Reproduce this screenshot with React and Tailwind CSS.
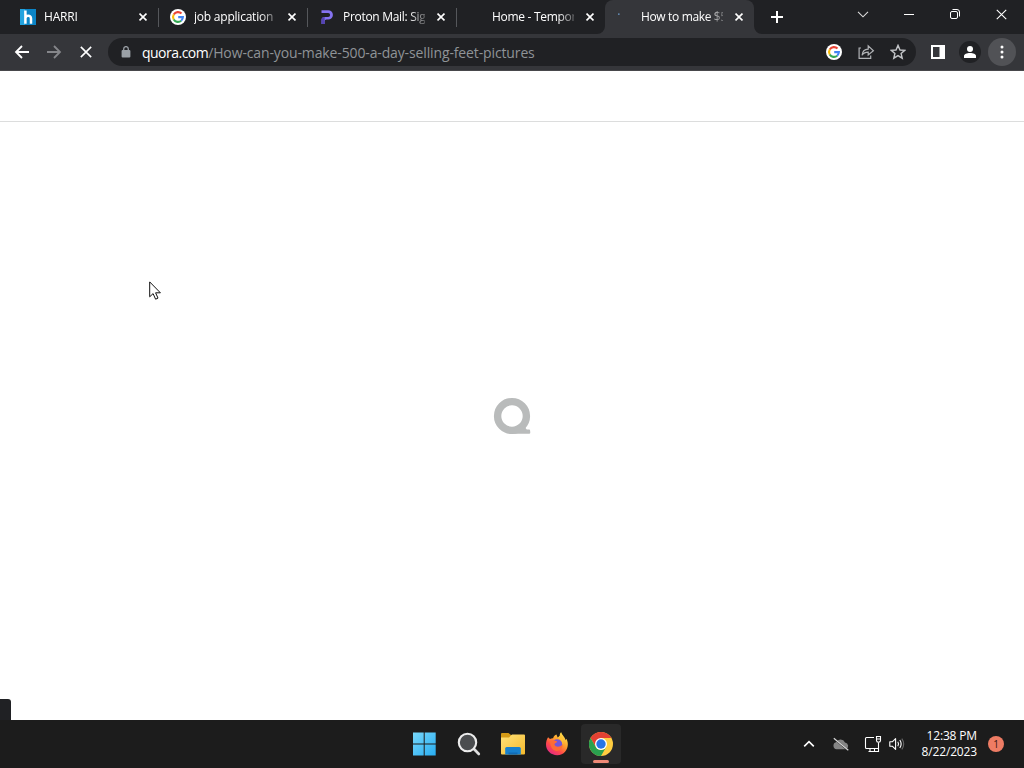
import React from "react";

function Cross({ size = 8, stroke = 1.6, color = "#fff" }) {
  return (
    <svg width={size} height={size} viewBox="0 0 10 10" className="block shrink-0">
      <path d="M0.7 0.7 9.3 9.3M9.3 0.7 0.7 9.3" stroke={color} strokeWidth={(stroke * 10) / size} fill="none" />
    </svg>
  );
}

function GoogleIcon() {
  return (
    <svg width="16" height="16" viewBox="0 0 16 16" className="block">
      <circle cx="8" cy="8" r="8" fill="#fff" />
      <g fill="none" strokeWidth="2.1">
        <path d="M3.75 5.5A4.9 4.9 0 0 1 11.5 4.6" stroke="#ea4335" />
        <path d="M3.75 5.5A4.9 4.9 0 0 0 3.75 10.5" stroke="#fbbc05" />
        <path d="M3.75 10.5A4.9 4.9 0 0 0 11.2 11.7" stroke="#34a853" />
        <path d="M11.2 11.7A4.9 4.9 0 0 0 12.9 8.1H8.2" stroke="#4285f4" />
      </g>
    </svg>
  );
}

function HarriIcon() {
  return (
    <svg width="16" height="16" viewBox="0 0 16 16" className="block">
      <path d="M0 0H16V16H0Z" fill="#0b84c6" />
      <path d="M0 0H5V16H0Z" fill="#22a3df" />
      <path d="M5.4 1.6V14.8M5.4 9.2C5.8 5.9 11 5.7 11 9.4V14.8" stroke="#fff" strokeWidth="2.5" fill="none" />
    </svg>
  );
}

function ProtonIcon() {
  return (
    <svg width="16" height="16" viewBox="0 0 16 16" className="block">
      <path d="M2.5 1.2H9.2A4.7 4.7 0 0 1 9.2 10.6H7.5A2 2 0 0 0 5.6 12.6V15H2.5V11.2A3.2 3.2 0 0 1 5.7 7.9H9.1A2 2 0 0 0 9.1 3.9H2.5Z" fill="#8573f0" />
      <path d="M2.5 11.2A3.2 3.2 0 0 1 5.7 7.9V11.3Q5.6 12 5.6 12.6V15H2.5Z" fill="#5543b5" />
    </svg>
  );
}

function LoadingDot() {
  return (
    <svg width="16" height="16" viewBox="0 0 16 16" className="block">
      <path d="M1 5.1H2.6" stroke="#6f9fd0" strokeWidth="1.4" />
    </svg>
  );
}

const tabs = [
  { title: "HARRI", icon: <HarriIcon />, sep: true, inset: "pl-[11px]", label: "ml-[8px] w-[83px] tracking-[-0.2px]" },
  { title: "job application -", icon: <GoogleIcon />, sep: true, inset: "pl-[12px]", label: "ml-[8px] w-[82px] tracking-[-0.22px]" },
  { title: "Proton Mail: Sig", icon: <ProtonIcon />, sep: true, inset: "pl-[12px]", label: "ml-[8px] w-[82px] tracking-[-0.3px]" },
  { title: "Home - Tempor", icon: null, sep: false, inset: "pl-[12px]", label: "ml-[8px] w-[82px] tracking-[-0.3px]" },
  { title: "How to make $5", icon: <LoadingDot />, active: true, inset: "pl-[12px]", label: "ml-[8px] w-[82px] tracking-[-0.35px]" },
];

function Tab({ tab }) {
  return (
    <div className={"relative flex h-[34px] w-[149px] shrink-0 items-center " + tab.inset + (tab.active ? " rounded-t-lg bg-[#35363a]" : "")}>
      {tab.active && (
        <svg className="absolute bottom-0 -left-2" width="165" height="8" viewBox="0 0 165 8">
          <path d="M0 8A8 8 0 0 0 8 0V8ZM157 0A8 8 0 0 0 165 8H157Z" fill="#35363a" />
        </svg>
      )}
      <div className="h-4 w-4 shrink-0">{tab.icon}</div>
      <div className={"shrink-0 whitespace-nowrap text-[12px] leading-[18px] text-white [mask-image:linear-gradient(to_right,#000_66px,transparent_88px)] " + tab.label}>
        {tab.title}
      </div>
      <div className="ml-[12px]"><Cross size={8} /></div>
      {tab.sep && <div className="-mr-px ml-auto h-[19px] w-px bg-[#55575b]" />}
    </div>
  );
}

function TabStrip() {
  return (
    <div className="flex h-[34px] bg-[#202124] pl-[9px]">
      {tabs.map((t) => <Tab key={t.title} tab={t} />)}
      <div className="flex w-[46px] items-center justify-center">
        <svg width="12" height="12" viewBox="0 0 12 12"><path d="M6 0V12M0 6H12" stroke="#fff" strokeWidth="2" /></svg>
      </div>
      <div className="ml-auto flex h-[28px]">
        <div className="flex w-[46px] items-center justify-center">
          <svg width="12" height="7" viewBox="0 0 12 7"><path d="M1 0.8 6 5.8 11 0.8" stroke="#ddd" strokeWidth="1.1" fill="none" /></svg>
        </div>
        <div className="flex w-[46px] items-center justify-center"><div className="mt-px h-px w-[10px] bg-white" /></div>
        <div className="flex w-[46px] items-center justify-center">
          <svg width="10" height="10" viewBox="0 0 10 10" fill="none" stroke="#fff">
            <rect x="0.5" y="2.5" width="7" height="7" rx="1.5" />
            <path d="M2.5 0.5H7A2.5 2.5 0 0 1 9.5 3V7.5" />
          </svg>
        </div>
        <div className="flex w-[46px] items-center justify-center"><Cross size={11} stroke={1.1} /></div>
      </div>
    </div>
  );
}

function Toolbar() {
  return (
    <div className="flex h-[37px] items-center border-b border-[#48484b] bg-[#35363a] pr-2 pl-[14px]">
      <svg width="16" height="14" viewBox="0 0 16 14" className="mr-4 shrink-0"><path d="M15 7H2M8 1 2 7 8 13" stroke="#fff" strokeWidth="1.8" fill="none" /></svg>
      <svg width="16" height="14" viewBox="0 0 16 14" className="mr-[18px] shrink-0"><path d="M1 7H14M8 1 14 7 8 13" stroke="#85868a" strokeWidth="1.8" fill="none" /></svg>
      <Cross size={12} stroke={1.6} />
      <div className="ml-4 flex h-7 w-[808px] shrink-0 items-center rounded-full bg-[#202124] pr-[10px] pl-[13px]">
        <svg width="10" height="12" viewBox="0 0 10 12" className="shrink-0">
          <rect x="0.6" y="4" width="8.8" height="7.6" rx="1" fill="#9aa0a6" />
          <path d="M2.7 5V2.9A2.3 2.3 0 0 1 7.3 2.9V5" stroke="#9aa0a6" strokeWidth="1.3" fill="none" />
        </svg>
        <div className="mt-px ml-[11px] text-[14px] leading-5 tracking-[-0.13px] whitespace-nowrap text-[#8f9397]">
          <span className="tracking-[-0.52px] text-white">quora.com</span>/How-can-you-make-500-a-day-selling-feet-pictures
        </div>
        <div className="ml-auto flex items-center">
          <GoogleIcon />
          <svg width="17" height="16" viewBox="0 0 17 16" className="ml-4" fill="none" stroke="#b0b2b5" strokeWidth="1.2">
            <path d="M3 4H1.1V14.3H12.7V11.4" />
            <path d="M4.1 11.2C4.4 7 7 5.3 10.2 5.1V1.9L15.4 6.7 10.2 11V8.1C7.5 8.1 5.6 8.8 4.1 11.2Z" />
          </svg>
          <svg width="16" height="16" viewBox="0 0 16 16" className="ml-[15px]"><path d="M8 1.4 10 6 14.8 6.4 11.1 9.5 12.2 14.2 8 11.6 3.8 14.2 4.9 9.5 1.2 6.4 6 6Z" fill="none" stroke="#c3c5c8" strokeWidth="1.4" /></svg>
        </div>
      </div>
      <svg width="14" height="14" viewBox="0 0 14 14" className="ml-[15px] shrink-0"><path fillRule="evenodd" d="M0 0H14V14H0ZM2 2V12H8.5V2Z" fill="#fff" /></svg>
      <div className="ml-[14px] flex h-[22px] w-[22px] shrink-0 items-center justify-center rounded-full bg-[#202124]">
        <svg width="12" height="12" viewBox="0 0 12 12" fill="#fff"><circle cx="6" cy="3" r="3" /><path d="M0 12V10C0 8.2 2.8 7 6 7S12 8.2 12 10V12Z" /></svg>
      </div>
      <div className="ml-[7px] flex h-7 w-7 shrink-0 items-center justify-center rounded-full bg-[#515256]">
        <svg width="4" height="14" viewBox="0 0 4 14" fill="#fff"><circle cx="2" cy="2" r="1.5" /><circle cx="2" cy="7" r="1.5" /><circle cx="2" cy="12" r="1.5" /></svg>
      </div>
    </div>
  );
}

function WindowsIcon() {
  return (
    <svg width="24" height="24" viewBox="0 0 24 24" className="block">
      <defs><linearGradient id="win" x1="0" y1="0" x2="1" y2="1"><stop stopColor="#78d7fa" /><stop offset="1" stopColor="#27adf2" /></linearGradient></defs>
      <path d="M1 0.5H11.7V11.5H1ZM12.7 0.5H23.7V11.5H12.7ZM1 12.5H11.7V23.5H1ZM12.7 12.5H23.7V23.5H12.7Z" fill="url(#win)" />
    </svg>
  );
}

function SearchIcon() {
  return (
    <svg width="24" height="24" viewBox="0 0 24 24" className="block">
      <path d="M17 17 21.8 22" stroke="#dedede" strokeWidth="2.6" strokeLinecap="round" />
      <circle cx="10.5" cy="10.5" r="8.7" fill="#4b4d4f" stroke="#ececec" strokeWidth="2.1" />
    </svg>
  );
}

function FolderIcon() {
  return (
    <svg width="26" height="24" viewBox="0 0 26 24" className="block">
      <defs><linearGradient id="folder" x1="0" y1="0" x2="1" y2="1"><stop stopColor="#ffe27a" /><stop offset="1" stopColor="#f4b92c" /></linearGradient></defs>
      <path d="M1 2Q1 1 2 1H8.5L11 3H24V8H1Z" fill="#d49a16" />
      <path d="M1 5.5H9L12 2.5H24Q25 2.5 25 3.5V21.5Q25 22.5 24 22.5H2Q1 22.5 1 21.5Z" fill="url(#folder)" />
      <path d="M5.2 22.5V16.5Q5.2 15 6.7 15H19.3Q20.8 15 20.8 16.5V22.5Z" fill="#1680ce" />
      <path d="M8.5 22.5V20.5H17.5V22.5Z" fill="#116bb5" />
    </svg>
  );
}

function FirefoxIcon() {
  return (
    <svg width="24" height="24" viewBox="0 0 24 24" className="block">
      <defs>
        <linearGradient id="fox" x1="0.85" y1="0.1" x2="0.25" y2="0.95"><stop stopColor="#ffe14a" /><stop offset="0.4" stopColor="#ff9b2c" /><stop offset="0.7" stopColor="#ff4a48" /><stop offset="1" stopColor="#e52b80" /></linearGradient>
      </defs>
      <path d="M3.1 5.2 5 7.1C6 6.4 7 6.1 8.1 6.2 8.7 4.3 10 3.2 11.4 2.6L12.7 5.5 14.8 3.8C14.6 2.2 15.1 1.1 16.2 0.3 17 3.2 19.8 5 20.8 8.3L21.4 6.8C25.1 13.3 21.5 23.2 12.2 23.3 5.9 23.3 1 18.6 1 12.6 1 9.6 1.8 7.2 3.1 5.2Z" fill="url(#fox)" />
      <circle cx="12.2" cy="12.3" r="5" fill="#7656d6" />
      <path d="M4.8 9.2C7.3 7.3 10.2 8.4 12.2 9.4 11.7 11 9.7 10.5 9.4 12.5 10.5 15 14 15.8 17.6 12.8 17.4 19 10.7 20.7 7.3 16.8 5.8 15 5.2 12 4.8 9.2Z" fill="#ff6b35" />
      <path d="M13.2 6.3C16.7 7.7 17.8 9.8 17.6 12.8 18.8 11 18.8 8.2 16.7 5.6L14.8 3.8Z" fill="#ffc331" />
    </svg>
  );
}

function ChromeIcon() {
  return (
    <svg width="24" height="24" viewBox="0 0 24 24" className="block">
      <circle cx="12" cy="12" r="12" fill="#ffcd40" />
      <path d="M1.6 6A12 12 0 0 1 22.4 6H12L6.8 15Z" fill="#e34133" />
      <path d="M1.6 6A12 12 0 0 0 12 24L17.2 15A6 6 0 0 1 6.8 15Z" fill="#2aa14f" />
      <circle cx="12" cy="12" r="6" fill="#fff" />
      <circle cx="12" cy="12" r="4.7" fill="#2874e6" />
    </svg>
  );
}

function Taskbar() {
  return (
    <div className="grid h-12 grid-cols-[412px_1fr] bg-[#1c1c1c]">
      <div />
      <div className="flex items-center">
        <WindowsIcon />
        <div className="ml-[21px]"><SearchIcon /></div>
        <div className="ml-[19px]"><FolderIcon /></div>
        <div className="ml-[19px]"><FirefoxIcon /></div>
        <div className="ml-3 flex h-10 w-10 flex-col items-center rounded bg-[#292929] pt-2">
          <ChromeIcon />
          <div className="mt-[4px] h-[3px] w-4 rounded-full bg-[#ef8977]" />
        </div>
        <div className="ml-auto flex items-center pr-[20px]">
          <svg width="12" height="8" viewBox="0 0 12 8"><path d="M1.2 6.4 6 1.6 10.8 6.4" fill="none" stroke="#fff" strokeWidth="1.6" /></svg>
          <svg width="18" height="16" viewBox="0 0 18 16" className="ml-[17px]">
            <path d="M4.5 13.2A3.6 3.6 0 0 1 4 6.2 5 5 0 0 1 13 6.5 3.5 3.5 0 0 1 14 13.2Z" fill="#858585" />
            <path d="M2.2 2.7 16.3 14.7" stroke="#1c1c1c" strokeWidth="1.6" />
            <path d="M1.8 2.2 16.3 14.2" stroke="#d8d8d8" strokeWidth="1.2" />
          </svg>
          <svg width="18" height="18" viewBox="0 0 18 18" className="ml-[14px]" fill="none" stroke="#fff" strokeWidth="1.1">
            <path d="M10 2.5H2.5Q1.5 2.5 1.5 3.5V12.5Q1.5 13.5 2.5 13.5H14.5M6 13.5V16.5M10.5 13.5V16.5M4.5 16.5H14.5V7.5" />
            <path d="M12.5 1.5H16.5V5.5Q16.5 7.2 14.5 7.2T12.5 5.5ZM12.5 4H16.5" />
          </svg>
          <svg width="16" height="14" viewBox="0 0 16 14" className="ml-[7px]" fill="none" strokeWidth="1.1">
            <path d="M0.8 4.8H3.3L6.6 1.6V12.4L3.3 9.2H0.8ZM8.8 4.8Q10.3 7 8.8 9.2M10.8 3Q13.5 7 10.8 11" stroke="#fff" strokeLinejoin="round" />
            <path d="M12.8 1.6Q16.6 7 12.8 12.4" stroke="#666" />
          </svg>
          <div className="ml-[16px] w-[56px] text-right text-[12px] leading-4 tracking-[-0.15px] whitespace-nowrap text-white">
            <div>12:38 PM</div>
            <div>8/22/2023</div>
          </div>
          <div className="ml-[11px] flex h-4 w-4 items-center justify-center rounded-full bg-[#ee7c64] text-[10px] leading-4 text-[#3a1710]">1</div>
        </div>
      </div>
    </div>
  );
}

export default function App() {
  return (
    <div className="relative flex h-[768px] w-[1024px] flex-col overflow-hidden bg-white font-['Open_Sans','Noto_Sans',sans-serif]">
      <TabStrip />
      <Toolbar />
      <div className="h-[51px] shrink-0 border-b border-[#dcdddd]" />
      <main className="flex flex-1 flex-col bg-white">
        <div className="flex flex-1 items-center justify-center pt-[11px]">
          <svg width="38" height="38" viewBox="0 0 38 38">
            <circle cx="19" cy="19" r="14.4" fill="none" stroke="#b9bbbb" strokeWidth="7.4" />
            <path d="M19 36.8V32L33 27Q31.5 30.5 33.8 32.6H36.2Q37 32.6 37.1 33.4L37.3 35.6Q37.3 36.8 36.2 36.8Z" fill="#b9bbbb" />
          </svg>
        </div>
        <div className="h-[21px] w-[11px] rounded-tr-[3px] bg-[#202124]" />
      </main>
      <Taskbar />
      <svg className="absolute top-[281px] left-[149px]" width="13" height="20" viewBox="0 0 13 20">
        <path d="M0.7 0.9V15.8L4.1 12.6 6.6 18.2 9 17.1 6.6 11.8H11.4Z" fill="#fff" stroke="#111" strokeWidth="1" />
      </svg>
    </div>
  );
}
